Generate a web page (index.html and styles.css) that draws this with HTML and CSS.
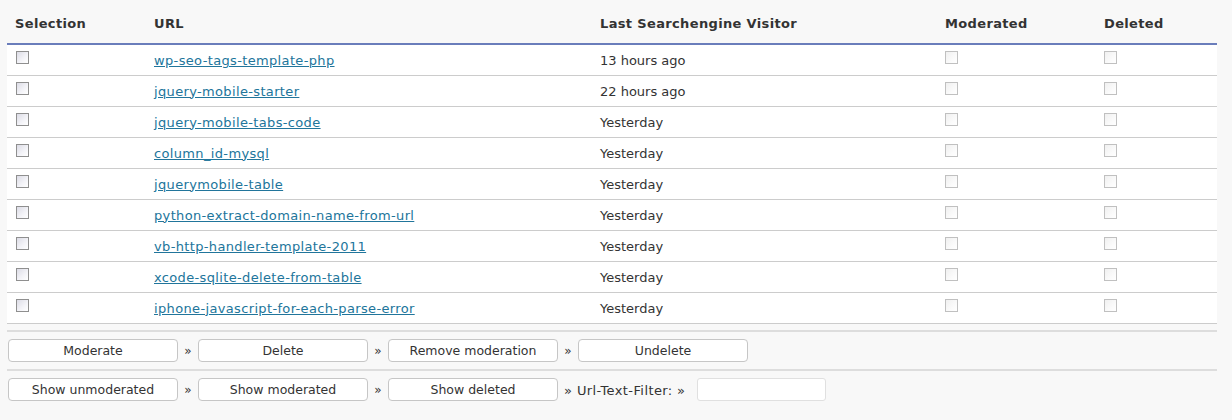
FILE: index.html
```html
<!DOCTYPE html>
<html>
<head>
<meta charset="utf-8">
<link rel="stylesheet" href="styles.css">
</head>
<body>
<div class="page">
  <table class="grid">
    <colgroup>
      <col class="c1"><col class="c2"><col class="c3"><col class="c4"><col class="c5">
    </colgroup>
    <thead>
      <tr><th>Selection</th><th>URL</th><th>Last Searchengine Visitor</th><th>Moderated</th><th>Deleted</th></tr>
    </thead>
    <tbody>
      <tr><td><input type="checkbox" class="cb"></td><td><a href="#">wp-seo-tags-template-php</a></td><td>13 hours ago</td><td><input type="checkbox" class="cb" disabled></td><td><input type="checkbox" class="cb" disabled></td></tr>
      <tr><td><input type="checkbox" class="cb"></td><td><a href="#">jquery-mobile-starter</a></td><td>22 hours ago</td><td><input type="checkbox" class="cb" disabled></td><td><input type="checkbox" class="cb" disabled></td></tr>
      <tr><td><input type="checkbox" class="cb"></td><td><a href="#">jquery-mobile-tabs-code</a></td><td>Yesterday</td><td><input type="checkbox" class="cb" disabled></td><td><input type="checkbox" class="cb" disabled></td></tr>
      <tr><td><input type="checkbox" class="cb"></td><td><a href="#">column_id-mysql</a></td><td>Yesterday</td><td><input type="checkbox" class="cb" disabled></td><td><input type="checkbox" class="cb" disabled></td></tr>
      <tr><td><input type="checkbox" class="cb"></td><td><a href="#">jquerymobile-table</a></td><td>Yesterday</td><td><input type="checkbox" class="cb" disabled></td><td><input type="checkbox" class="cb" disabled></td></tr>
      <tr><td><input type="checkbox" class="cb"></td><td><a href="#">python-extract-domain-name-from-url</a></td><td>Yesterday</td><td><input type="checkbox" class="cb" disabled></td><td><input type="checkbox" class="cb" disabled></td></tr>
      <tr><td><input type="checkbox" class="cb"></td><td><a href="#">vb-http-handler-template-2011</a></td><td>Yesterday</td><td><input type="checkbox" class="cb" disabled></td><td><input type="checkbox" class="cb" disabled></td></tr>
      <tr><td><input type="checkbox" class="cb"></td><td><a href="#">xcode-sqlite-delete-from-table</a></td><td>Yesterday</td><td><input type="checkbox" class="cb" disabled></td><td><input type="checkbox" class="cb" disabled></td></tr>
      <tr><td><input type="checkbox" class="cb"></td><td><a href="#">iphone-javascript-for-each-parse-error</a></td><td>Yesterday</td><td><input type="checkbox" class="cb" disabled></td><td><input type="checkbox" class="cb" disabled></td></tr>
    </tbody>
  </table>
  <div class="actions">
    <button class="btn">Moderate</button><span class="sep">»</span>
    <button class="btn">Delete</button><span class="sep">»</span>
    <button class="btn">Remove moderation</button><span class="sep">»</span>
    <button class="btn">Undelete</button>
  </div>
  <div class="actions">
    <button class="btn">Show unmoderated</button><span class="sep">»</span>
    <button class="btn">Show moderated</button><span class="sep">»</span>
    <button class="btn">Show deleted</button><span class="label">» Url-Text-Filter: »</span>
    <input type="text" class="filter">
  </div>
</div>
</body>
</html>
```
FILE: styles.css
```css
html, body {
  margin: 0;
  padding: 0;
  background: #f8f8f8;
}
body {
  font-family: "DejaVu Sans", Verdana, sans-serif;
  font-size: 13px;
  color: #333;
}
.page {
  width: 1210px;
  margin-left: 7px;
}
.grid {
  width: 1210px;
  border-collapse: collapse;
  table-layout: fixed;
}
.c1 { width: 139px; }
.c2 { width: 446px; }
.c3 { width: 345px; }
.c4 { width: 159px; }
.c5 { width: 121px; }
.grid th {
  height: 44px;
  box-sizing: border-box;
  padding: 4px 8px 0;
  text-align: left;
  font-size: 13px;
  font-weight: bold;
  letter-spacing: 0.35px;
  color: #333;
  border-bottom: 2px solid #6a7dbb;
  vertical-align: middle;
}
.grid td {
  height: 31px;
  box-sizing: border-box;
  padding: 1px 8px 0;
  background: #fff;
  border-bottom: 1px solid #ccc;
  vertical-align: middle;
  white-space: nowrap;
}
.grid a {
  color: #21759b;
  text-decoration: underline;
  letter-spacing: 0.35px;
}
.cb {
  -webkit-appearance: none;
  appearance: none;
  display: block;
  width: 13px;
  height: 13px;
  margin: -6px 0 0 1px;
  box-sizing: border-box;
  border: 1px solid #8f8f8f;
  background: linear-gradient(135deg, #dcdce6 0%, #f4f4f8 60%, #ffffff 100%);
  border-radius: 0;
}
.cb:disabled {
  border-color: #c0c0c0;
  background: linear-gradient(135deg, #f0f0f0 0%, #fafafa 60%, #ffffff 100%);
  margin-left: 0;
}
.actions {
  display: flex;
  align-items: center;
  border-top: 2px solid #ddd;
  padding: 7px 0 7px 1px;
}
.actions:first-of-type {
  margin-top: 6px;
}
.btn {
  width: 170px;
  height: 23px;
  box-sizing: border-box;
  border: 1px solid #c6c6c6;
  border-radius: 4px;
  background: #fff;
  font-family: "DejaVu Sans", Verdana, sans-serif;
  font-size: 12.5px;
  color: #333;
  padding: 1px 0 0;
}
.sep {
  width: 20px;
  text-align: center;
  font-size: 12px;
  padding-top: 2px;
}
.label {
  box-sizing: border-box;
  width: 139px;
  padding: 2px 0 0 6px;
  font-size: 13px;
  letter-spacing: 0.4px;
  white-space: nowrap;
}
.filter {
  width: 129px;
  height: 23px;
  box-sizing: border-box;
  border: 1px solid #e0e0e0;
  border-radius: 3px;
  background: #fff;
  margin: 0;
}
```
